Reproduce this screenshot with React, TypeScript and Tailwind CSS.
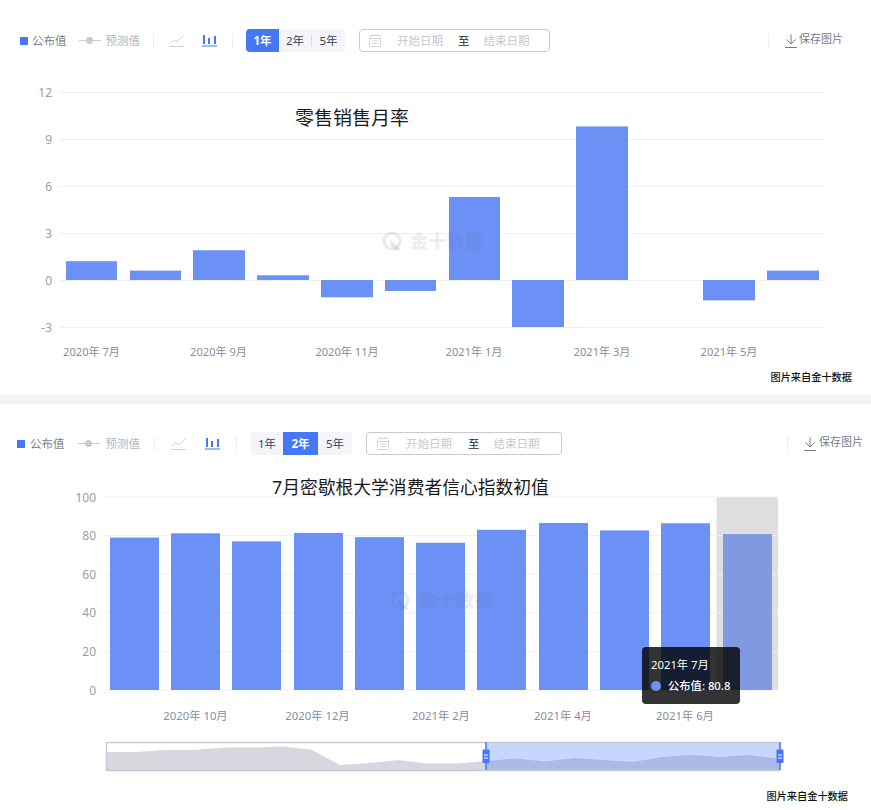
import React from 'react';

const FONT = "font-['Noto_Sans','Noto_Sans_CJK_SC',sans-serif]";
const BLUE = '#6b91f7';

const LineIcon = ({ className }: { className: string }) => (
  <svg viewBox="0 0 15 13" className={className} fill="none" stroke="#cfd1d8" strokeWidth="1">
    <path d="M1 9 L5 6 L8 7.5 L14 2" />
    <path d="M0 12.5 H15" />
  </svg>
);

const BarIcon = ({ className }: { className: string }) => (
  <svg viewBox="0 0 15 13" className={className} fill="#4577f6">
    <rect x="1" y="1" width="2" height="9" />
    <rect x="6" y="4" width="2" height="6" />
    <rect x="12" y="2" width="2" height="8" />
    <rect x="0" y="11.5" width="15" height="1" />
  </svg>
);

const CalendarIcon = ({ className }: { className: string }) => (
  <svg viewBox="0 0 12 13" className={className} fill="none" stroke="#d3d4da" strokeWidth="1">
    <rect x="0.5" y="1.5" width="11" height="11" rx="1" />
    <path d="M0.5 4.5 H11.5 M3 7 H9 M3 9.5 H9 M3 0 V2 M9 0 V2" />
  </svg>
);

const SaveIcon = ({ className }: { className: string }) => (
  <svg viewBox="0 0 12 14" className={className} fill="none" stroke="#777c8c" strokeWidth="1">
    <path d="M6 0.5 V10 M1.5 5.5 L6 10 L10.5 5.5 M0 13.5 H12" />
  </svg>
);

type Bar = { x: number; w: number; v: number };

const Watermark = ({ x, y, size }: { x: number; y: number; size: number }) => (
  <g transform={`translate(${x} ${y})`} fill="#5f6f94" fillOpacity="0.15">
    <circle cx="10" cy="9" r="8" fill="none" stroke="#5f6f94" strokeOpacity="0.15" strokeWidth="3" />
    <path d="M9 8 L19 18 L14 19 L8 13 Z" />
    <text x="28" y="16" fontSize={size} fontWeight="900" letterSpacing="0.3">金十数据</text>
  </g>
);

const Toolbar1 = () => (
  <div className="mt-[29px] flex h-[23px] items-center pl-5 text-[11.5px] leading-none">
    <span className="h-2 w-2 shrink-0 bg-[#4577f6]" />
    <span className="ml-1 text-[#7a7f8e]">公布值</span>
    <span className="relative ml-3 h-px w-[22px] shrink-0 bg-[#c9cbd1]">
      <span className="absolute left-[7px] top-[-3px] h-[7px] w-[7px] rounded-full bg-[#c9cbd1]" />
    </span>
    <span className="ml-[5px] text-[#b3b6c0]">预测值</span>
    <span className="ml-[13px] h-[15px] w-px bg-[#eeeff2]" />
    <LineIcon className="ml-[15px] h-[13px] w-[15px]" />
    <BarIcon className="ml-[18px] h-[13px] w-[15px]" />
    <span className="ml-[15px] h-[15px] w-px bg-[#eeeff2]" />
    <div className="ml-[13px] flex h-[23px] w-[99px] items-center overflow-hidden rounded bg-[#f3f5fa] text-[#3f4252]">
      <span className="flex h-full w-[33px] items-center justify-center bg-[#4577f6] font-bold text-white">1年</span>
      <span className="flex h-full w-8 items-center justify-center">2年</span>
      <span className="h-3 w-px bg-[#d8dae2]" />
      <span className="flex h-full w-[33px] items-center justify-center">5年</span>
    </div>
    <div className="ml-[14px] flex h-[23px] w-[191px] items-center rounded border border-[#c9c9d6] text-[#c5c7cf]">
      <CalendarIcon className="ml-[9px] h-[13px] w-3" />
      <span className="ml-[16px]">开始日期</span>
      <span className="ml-[15px] text-[#2b2b2b]">至</span>
      <span className="ml-[14px]">结束日期</span>
    </div>
    <span className="ml-[218px] h-[15px] w-px bg-[#eeeff2]" />
    <SaveIcon className="ml-4 h-[14px] w-3" />
    <span className="ml-[2px] -translate-y-[2px] text-[11px] text-[#777c8c]">保存图片</span>
  </div>
);

const Toolbar2 = () => (
  <div className="mt-7 flex h-[23px] items-center pl-[17px] text-[11.5px] leading-none">
    <span className="h-2 w-2 shrink-0 bg-[#4577f6]" />
    <span className="ml-[5px] text-[#7a7f8e]">公布值</span>
    <span className="relative ml-[13px] h-px w-[22px] shrink-0 bg-[#c9cbd1]">
      <span className="absolute left-[7px] top-[-3px] h-[7px] w-[7px] rounded-full bg-[#c9cbd1]" />
    </span>
    <span className="ml-[6px] text-[#b3b6c0]">预测值</span>
    <span className="ml-[14px] h-[15px] w-px bg-[#eeeff2]" />
    <LineIcon className="ml-4 h-[13px] w-[15px]" />
    <BarIcon className="ml-[19px] h-[13px] w-[15px]" />
    <span className="ml-4 h-[15px] w-px bg-[#eeeff2]" />
    <div className="ml-[14px] flex h-[23px] w-[101px] items-center overflow-hidden rounded bg-[#f3f5fa] text-[#3f4252]">
      <span className="flex h-full w-8 items-center justify-center">1年</span>
      <span className="flex h-full w-[35px] items-center justify-center bg-[#4577f6] font-bold text-white">2年</span>
      <span className="flex h-full w-[34px] items-center justify-center">5年</span>
    </div>
    <div className="ml-[14px] flex h-[23px] w-[196px] items-center rounded border border-[#c9c9d6] text-[#c5c7cf]">
      <CalendarIcon className="ml-[10px] h-[13px] w-3" />
      <span className="ml-[17px]">开始日期</span>
      <span className="ml-4 text-[#2b2b2b]">至</span>
      <span className="ml-[14px]">结束日期</span>
    </div>
    <span className="ml-[225px] h-[15px] w-px bg-[#eeeff2]" />
    <SaveIcon className="ml-4 h-[14px] w-3" />
    <span className="ml-[3px] -translate-y-[2px] text-[11px] text-[#777c8c]">保存图片</span>
  </div>
);

const bars1: Bar[] = [
  { x: 66, w: 51, v: 1.2 },
  { x: 130, w: 51, v: 0.6 },
  { x: 193, w: 52, v: 1.9 },
  { x: 257, w: 52, v: 0.3 },
  { x: 321, w: 52, v: -1.1 },
  { x: 385, w: 51, v: -0.7 },
  { x: 449, w: 51, v: 5.3 },
  { x: 512, w: 52, v: -3 },
  { x: 576, w: 52, v: 9.8 },
  { x: 703, w: 52, v: -1.3 },
  { x: 767, w: 52, v: 0.6 },
];

const Chart1 = () => {
  const ticks = [12, 9, 6, 3, 0, -3];
  const labels: [number, string][] = [
    [91.5, '2020年 7月'],
    [218.5, '2020年 9月'],
    [347, '2020年 11月'],
    [474, '2021年 1月'],
    [602, '2021年 3月'],
    [729, '2021年 5月'],
  ];
  return (
    <svg viewBox="0 70 871 298" className={`mt-[18px] block h-[298px] w-[871px] ${FONT}`}>
      {ticks.map((t) => {
        const y = 280 - (t * 47) / 3;
        return (
          <g key={t}>
            <line x1="60" x2="825" y1={y + 0.5} y2={y + 0.5} stroke="#eeeff2" />
            <text x="52" y={y + 4.5} fontSize="12" textAnchor="end" fill="#9a9dab">{t}</text>
          </g>
        );
      })}
      {bars1.map((b) => {
        const h = (Math.abs(b.v) * 47) / 3;
        return <rect key={b.x} x={b.x} y={b.v > 0 ? 280 - h : 280} width={b.w} height={h} fill={BLUE} />;
      })}
      {labels.map(([x, s]) => (
        <text key={s} x={x} y="356" fontSize="11.1" textAnchor="middle" fill="#8a8d9b">{s}</text>
      ))}
      <text x="295" y="125" fontSize="19" fill="#1a1a1a">零售销售月率</text>
      <Watermark x={382} y={232} size={18} />
    </svg>
  );
};

const bars2 = [79, 81.2, 77, 81.4, 79.2, 76.3, 83, 86.5, 82.7, 86.4, 80.8];
const bars2X = [110, 171, 232, 294, 355, 416, 477, 539, 600, 661, 723];

const sliderPts: [number, number][] = [
  [106, 752], [135, 752], [165, 750], [192, 750], [225, 747.5], [255, 747.5], [282, 746.5], [311, 749.5],
  [340, 765], [370, 763], [398, 760], [428, 763.5], [457, 763.5], [486, 761], [516, 758.6], [545, 761.6],
  [575, 758], [603, 760], [633, 762], [663, 757], [691, 755], [720, 757], [750, 755], [780, 759],
];

const Handle = ({ x }: { x: number }) => (
  <g>
    <rect x={x - 0.75} y="742" width="1.5" height="28" fill="#4577f6" />
    <rect x={x - 3.5} y="749.5" width="7" height="13.5" rx="1" fill="#4577f6" />
    <path d={`M${x - 2} 755 H${x + 2} M${x - 2} 758 H${x + 2}`} stroke="#fff" strokeWidth="1" />
  </g>
);

const Chart2 = () => {
  const ticks = [100, 80, 60, 40, 20, 0];
  const labels: [number, string][] = [
    [195.5, '2020年 10月'],
    [317.5, '2020年 12月'],
    [441, '2021年 2月'],
    [563, '2021年 4月'],
    [685, '2021年 6月'],
  ];
  const area = `M106 770 L${sliderPts.map(([x, y]) => `${x} ${y}`).join(' L')} L780 770 Z`;
  return (
    <div className="relative">
      <svg viewBox="0 455 871 330" className={`block h-[330px] w-[871px] ${FONT}`}>
        <rect x="716.5" y="497" width="61.5" height="193" fill="#dedede" />
        {ticks.map((t) => {
          const y = 690 - t * 1.93;
          return (
            <g key={t}>
              <line x1="103" x2="778" y1={y} y2={y} stroke="#eeeff2" />
              <text x="96" y={y + 4.5} fontSize="12" textAnchor="end" fill="#9a9dab">{t}</text>
            </g>
          );
        })}
        {bars2.map((v, i) => (
          <rect key={i} x={bars2X[i]} y={690 - v * 1.93} width="49" height={v * 1.93} fill={i === 10 ? '#7f9ae0' : BLUE} />
        ))}
        {labels.map(([x, s]) => (
          <text key={s} x={x} y="720" fontSize="11.3" textAnchor="middle" fill="#8a8d9b">{s}</text>
        ))}
        <text x="272" y="494" fontSize="17.8" fill="#1a1a1a">7月密歇根大学消费者信心指数初值</text>
        <Watermark x={390} y={591} size={18.5} />
        <path d={area} fill="#d6d7df" />
        <rect x="486" y="742" width="294" height="28" fill="#4577f6" fillOpacity="0.3" />
        <rect x="106.5" y="742.5" width="673" height="28" fill="none" stroke="#c8c9d3" strokeWidth="1.5" />
        <Handle x={486} />
        <Handle x={780} />
      </svg>
      <div className="absolute left-[642px] top-[192px] h-[57px] w-[98px] whitespace-nowrap rounded bg-[#000000cc] px-[9px] pt-[10px] text-[11.3px] leading-4 text-white">
        <div>2021年 7月</div>
        <div className="mt-[5px] flex items-center font-medium">
          <span className="mr-[7px] h-[10px] w-[10px] shrink-0 rounded-full bg-[#6b91f7]" />
          公布值: 80.8
        </div>
      </div>
    </div>
  );
};

export default function App() {
  return (
    <div className={`w-[871px] bg-white ${FONT}`}>
      <section className="flex h-[394px] flex-col">
        <Toolbar1 />
        <Chart1 />
        <div className="mt-px pr-[19px] text-right text-[10.2px] font-medium leading-4 text-[#111]">图片来自金十数据</div>
      </section>
      <div className="h-[10px] bg-[#f4f4f4]" />
      <section className="flex h-[406px] flex-col">
        <Toolbar2 />
        <Chart2 />
        <div className="mt-[3px] pr-[23px] text-right text-[10.2px] font-medium leading-4 text-[#111]">图片来自金十数据</div>
      </section>
    </div>
  );
}
